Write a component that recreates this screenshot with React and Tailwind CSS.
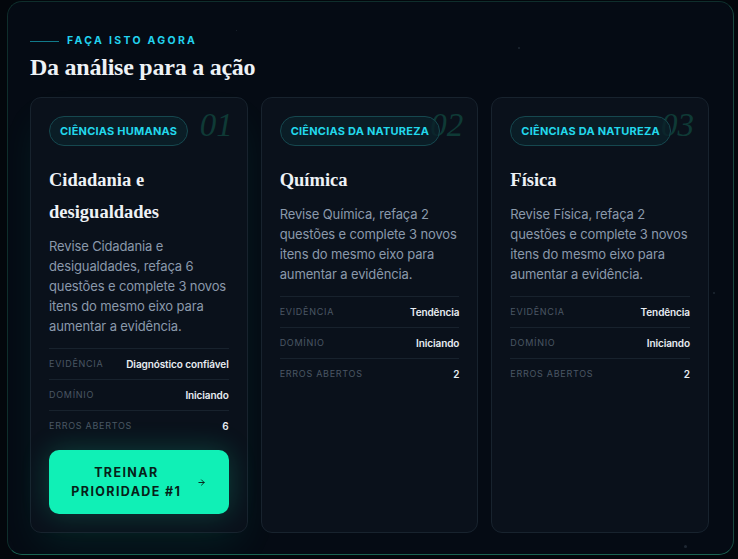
import { ArrowRight } from "lucide-react";

const cards = [
    {
        num: "01",
        area: "CIÊNCIAS HUMANAS",
        title: "Cidadania e desigualdades",
        text: "Revise Cidadania e desigualdades, refaça 6 questões e complete 3 novos itens do mesmo eixo para aumentar a evidência.",
        evidencia: "Diagnóstico confiável",
        dominio: "Iniciando",
        erros: "6",
        cta: true,
    },
    {
        num: "02",
        area: "CIÊNCIAS DA NATUREZA",
        title: "Química",
        text: "Revise Química, refaça 2 questões e complete 3 novos itens do mesmo eixo para aumentar a evidência.",
        evidencia: "Tendência",
        dominio: "Iniciando",
        erros: "2",
    },
    {
        num: "03",
        area: "CIÊNCIAS DA NATUREZA",
        title: "Física",
        text: "Revise Física, refaça 2 questões e complete 3 novos itens do mesmo eixo para aumentar a evidência.",
        evidencia: "Tendência",
        dominio: "Iniciando",
        erros: "2",
    },
];

// pontinhos decorativos do fundo
const dots = [
    [518, 47, 2], [176, 189, 2], [283, 217, 1], [595, 373, 3], [684, 545, 3],
    [713, 292, 2], [682, 190, 2], [146, 352, 1], [330, 290, 1], [560, 300, 2],
    [104, 436, 1], [455, 452, 1], [236, 30, 1], [640, 150, 1],
];

function Stat({ label, value }) {
    return (
        <div className="flex h-[31px] items-center justify-between border-t border-[#18222d]">
            <span className="text-[9px] tracking-[0.08em] text-[#4a5764]">{label}</span>
            <span className="text-[10px] font-semibold tracking-[-0.01em] text-[#e8edf2]">{value}</span>
        </div>
    );
}

function Card({ card }) {
    return (
        <div className={`relative flex flex-col rounded-[11px] border border-[#18232e] bg-[#0a111b] p-[18px] ${card.cta ? "shadow-[0_18px_40px_-10px_rgba(16,240,180,0.10)]" : ""}`}>
            <span className="absolute right-[14px] top-[11px] font-['Liberation_Serif',serif] text-[33px] italic leading-none text-[#0f3a36]">
                {card.num}
            </span>
            <div className="relative flex">
                <span className="flex h-[30px] items-center rounded-full border border-[#16484f] bg-[#0a2029]/80 px-[10px] text-[11px] font-bold tracking-[0.02em] text-[#22d8ec]">
                    {card.area}
                </span>
            </div>
            <h3 className="mt-[18px] font-['Liberation_Serif',serif] text-[18.5px] font-bold leading-[32px] text-[#eef2f6]">
                {card.title}
            </h3>
            <p className="mt-[8px] text-[13px] leading-[20px] tracking-[-0.01em] text-[#8a99ab]">{card.text}</p>
            <div className="mt-[12px]">
                <Stat label="EVIDÊNCIA" value={card.evidencia} />
                <Stat label="DOMÍNIO" value={card.dominio} />
                <Stat label="ERROS ABERTOS" value={card.erros} />
            </div>
            {card.cta && (
                <button className="mt-[9px] flex h-[64px] items-center justify-center gap-[16px] rounded-[10px] bg-[#10f0b6] shadow-[0_0_28px_rgba(16,240,182,0.22)]">
                    <span className="text-center text-[12.5px] font-bold leading-[19px] tracking-[0.11em] text-[#072018]">
                        TREINAR
                        <br />
                        PRIORIDADE #1
                    </span>
                    <ArrowRight className="h-[9px] w-[9px] text-[#072018]" strokeWidth={2.5} />
                </button>
            )}
        </div>
    );
}

export default function App() {
    return (
        <div className="min-h-screen w-full bg-[#03070c] font-['Inter',sans-serif]">
            <div className="ml-[7px] pt-[1px]">
                <div className="relative h-[554px] w-[727px] overflow-hidden rounded-[15px] border border-[#0f2e2c] border-b-[#1a6553] border-r-[#17493f] bg-[#050b14] pb-[22px] pl-[22px] pr-[24px] pt-[32px]">
                    {dots.map(([x, y, s], i) => (
                        <span
                            key={i}
                            className="absolute rounded-full bg-[#5b6b7a]/30"
                            style={{ left: x - 8, top: y - 2, width: s, height: s }}
                        />
                    ))}
                    <div className="relative flex h-[14px] items-center gap-[8px]">
                        <span className="h-px w-[29px] bg-[#117a8a]" />
                        <span className="text-[10.5px] font-bold tracking-[0.22em] text-[#22d3ee]">FAÇA ISTO AGORA</span>
                    </div>
                    <h2 className="relative mt-[5px] font-['Liberation_Serif',serif] text-[24px] font-bold leading-[28px] tracking-[-0.01em] text-[#eef2f6]">
                        Da análise para a ação
                    </h2>
                    <div className="relative mt-[16px] grid grid-cols-3 gap-[13px]">
                        {cards.map((card) => (
                            <Card key={card.num} card={card} />
                        ))}
                    </div>
                </div>
            </div>
        </div>
    );
}
